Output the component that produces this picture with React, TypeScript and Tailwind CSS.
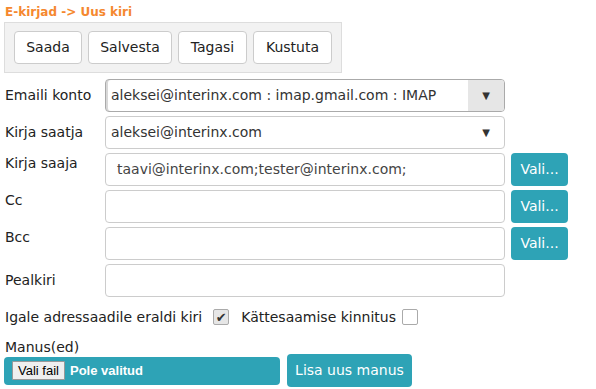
import React from "react";

const fieldCls =
  "h-[33px] rounded-[4px] border border-[#cccccc] bg-white";

const ValiButton = () => (
  <button className="h-[33px] w-[57px] rounded-[4px] bg-[#2ea3b6] text-[14px] text-white">
    Vali...
  </button>
);

export default function App() {
  return (
    <div className="w-[596px] h-[389px] bg-white text-[14px] text-[#222] font-['DejaVu_Sans',sans-serif] relative overflow-hidden">
      <div className="pl-[5px] pt-[3px] h-[22px] text-[12px] font-bold text-[#f5882f]">
        E-kirjad -&gt; Uus kiri
      </div>

      {/* toolbar */}
      <div className="ml-[4px] w-[338px] h-[51px] border border-[#dddddd] bg-[#f2f2f2] flex items-center gap-[6px] pl-[9px]">
        {[
          ["Saada", "w-[68px]"],
          ["Salvesta", "w-[84px]"],
          ["Tagasi", "w-[69px]"],
          ["Kustuta", "w-[79px]"],
        ].map(([t, w]) => (
          <button
            key={t}
            className={`${w} h-[33px] rounded-[4px] border border-[#cccccc] bg-white text-[14px] text-[#222]`}
          >
            {t}
          </button>
        ))}
      </div>

      <div className="mt-[6px] grid grid-cols-[100px_400px_63px] gap-y-[4px] pl-[5px]">
        {/* Emaili konto */}
        <div className="flex items-center">Emaili konto</div>
        <div className="h-[33px] rounded-[4px] border border-[#aaaaaa] bg-white flex overflow-hidden shadow-[inset_2px_0_0_#d8d8d8]">
          <div className="flex-1 flex items-center pl-[5px] text-[#333]">
            aleksei@interinx.com : imap.gmail.com : IMAP
          </div>
          <div className="w-[36px] bg-[#e6e6e6] flex items-center justify-center text-[10px] text-[#333]">
            ▼
          </div>
        </div>
        <div />

        {/* Kirja saatja */}
        <div className="flex items-center">Kirja saatja</div>
        <div className={`${fieldCls} flex`}>
          <div className="flex-1 flex items-center pl-[5px] text-[#333]">
            aleksei@interinx.com
          </div>
          <div className="w-[36px] flex items-center justify-center text-[10px] text-[#333]">
            ▼
          </div>
        </div>
        <div />

        {/* Kirja saaja */}
        <div>Kirja saaja</div>
        <div className={`${fieldCls} flex items-center pl-[11px] text-[#444]`}>
          taavi@interinx.com;tester@interinx.com;
        </div>
        <div className="pl-[6px]">
          <ValiButton />
        </div>

        {/* Cc */}
        <div>Cc</div>
        <div className={fieldCls} />
        <div className="pl-[6px]">
          <ValiButton />
        </div>

        {/* Bcc */}
        <div>Bcc</div>
        <div className={fieldCls} />
        <div className="pl-[6px]">
          <ValiButton />
        </div>

        {/* Pealkiri */}
        <div className="flex items-center">Pealkiri</div>
        <div className={fieldCls} />
        <div />
      </div>

      <div className="mt-[10px] pl-[5px] flex items-center h-[20px]">
        <span>Igale adressaadile eraldi kiri</span>
        <span className="ml-[11px] w-[16px] h-[16px] rounded-[2px] border border-[#aaaaaa] bg-[#e6e6e6] flex items-center justify-center text-[13px] text-[#333] leading-none">
          ✔
        </span>
        <span className="ml-[12px]">Kättesaamise kinnitus</span>
        <span className="ml-[6px] w-[16px] h-[16px] rounded-[2px] border border-[#aaaaaa] bg-white" />
      </div>

      <div className="pl-[5px] mt-[13px] h-[14px] leading-[14px]">Manus(ed)</div>

      <div className="flex items-center pl-[4px]">
        <div className="w-[276px] h-[28px] rounded-[4px] bg-[#2ea3b6] flex items-center pl-[8px] gap-[5px]">
          <span className="h-[19px] w-[53px] justify-center border border-[#999] bg-[#efefef] rounded-[1px] text-[13px] text-black font-['Liberation_Sans',sans-serif] flex items-center">
            Vali fail
          </span>
          <span className="text-white text-[13px] font-['Liberation_Sans',sans-serif] font-bold">
            Pole valitud
          </span>
        </div>
        <button className="ml-[7px] w-[125px] h-[33px] rounded-[4px] bg-[#2ea3b6] text-white text-[14px]">
          Lisa uus manus
        </button>
      </div>
    </div>
  );
}
